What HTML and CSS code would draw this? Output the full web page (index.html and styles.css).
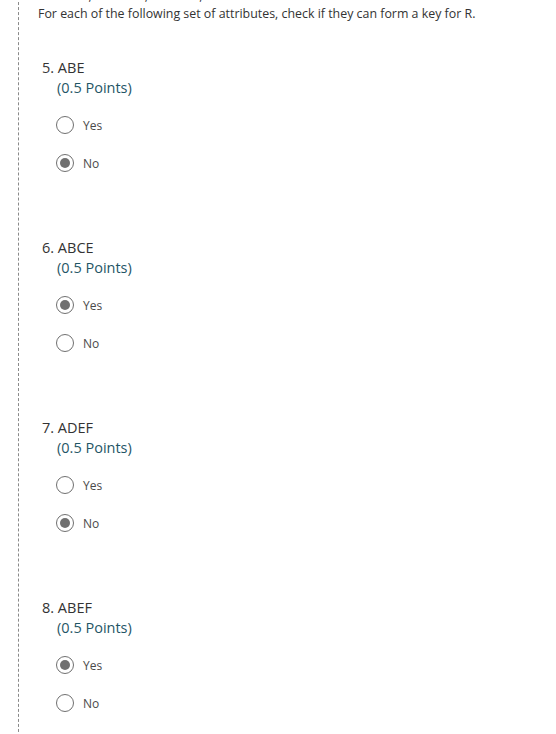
FILE: index.html
```html
<!DOCTYPE html>
<html>
<head>
<meta charset="utf-8">
<link rel="stylesheet" href="styles.css">
</head>
<body>
<div class="page">
  <div class="intro">
    <p class="cut">CDE → B, ACD → F, BEF → C, B → D</p>
    <p class="lead">For each of the following set of attributes, check if they can form a key for R.</p>
  </div>

  <div class="question">
    <div class="title">5. ABE</div>
    <div class="points">(0.5 Points)</div>
    <div class="options">
      <div class="option"><span class="radio"></span><span class="label">Yes</span></div>
      <div class="option"><span class="radio checked"></span><span class="label">No</span></div>
    </div>
  </div>

  <div class="question">
    <div class="title">6. ABCE</div>
    <div class="points">(0.5 Points)</div>
    <div class="options">
      <div class="option"><span class="radio checked"></span><span class="label">Yes</span></div>
      <div class="option"><span class="radio"></span><span class="label">No</span></div>
    </div>
  </div>

  <div class="question">
    <div class="title">7. ADEF</div>
    <div class="points">(0.5 Points)</div>
    <div class="options">
      <div class="option"><span class="radio"></span><span class="label">Yes</span></div>
      <div class="option"><span class="radio checked"></span><span class="label">No</span></div>
    </div>
  </div>

  <div class="question">
    <div class="title">8. ABEF</div>
    <div class="points">(0.5 Points)</div>
    <div class="options">
      <div class="option"><span class="radio checked"></span><span class="label">Yes</span></div>
      <div class="option"><span class="radio"></span><span class="label">No</span></div>
    </div>
  </div>
</div>
</body>
</html>
```

FILE: styles.css
```css
html, body {
  margin: 0;
  padding: 0;
  background: #ffffff;
}
body {
  font-family: "Open Sans", "Noto Sans", sans-serif;
  color: #333333;
  overflow: hidden;
}
.page {
  margin-left: 18px;
  border-left: 1px dashed #8a8a8a;
  padding-left: 19px;
  min-height: 760px;
}
.intro {
  margin-top: -13px;
}
.intro p {
  margin: 0;
  font-size: 12.4px;
  line-height: 18px;
  color: #333;
}
.question {
  padding-top: 35px;
  padding-left: 4px;
  height: 145px;
}
.title {
  font-size: 14.5px;
  line-height: 20px;
  color: #333;
}
.points {
  font-size: 14.5px;
  line-height: 20px;
  color: #1f5666;
  padding-left: 15px;
}
.options {
  padding-left: 14px;
  padding-top: 8px;
  display: flex;
  flex-direction: column;
}
.option {
  display: flex;
  align-items: center;
  height: 38px;
  gap: 9px;
}
.radio {
  box-sizing: border-box;
  width: 18px;
  height: 18px;
  border: 1px solid #707070;
  border-radius: 50%;
  display: flex;
  align-items: center;
  justify-content: center;
}
.radio.checked::after {
  content: "";
  width: 10px;
  height: 10px;
  border-radius: 50%;
  background: #707070;
}
.label {
  font-size: 12px;
  color: #4a4a4a;
}
```
